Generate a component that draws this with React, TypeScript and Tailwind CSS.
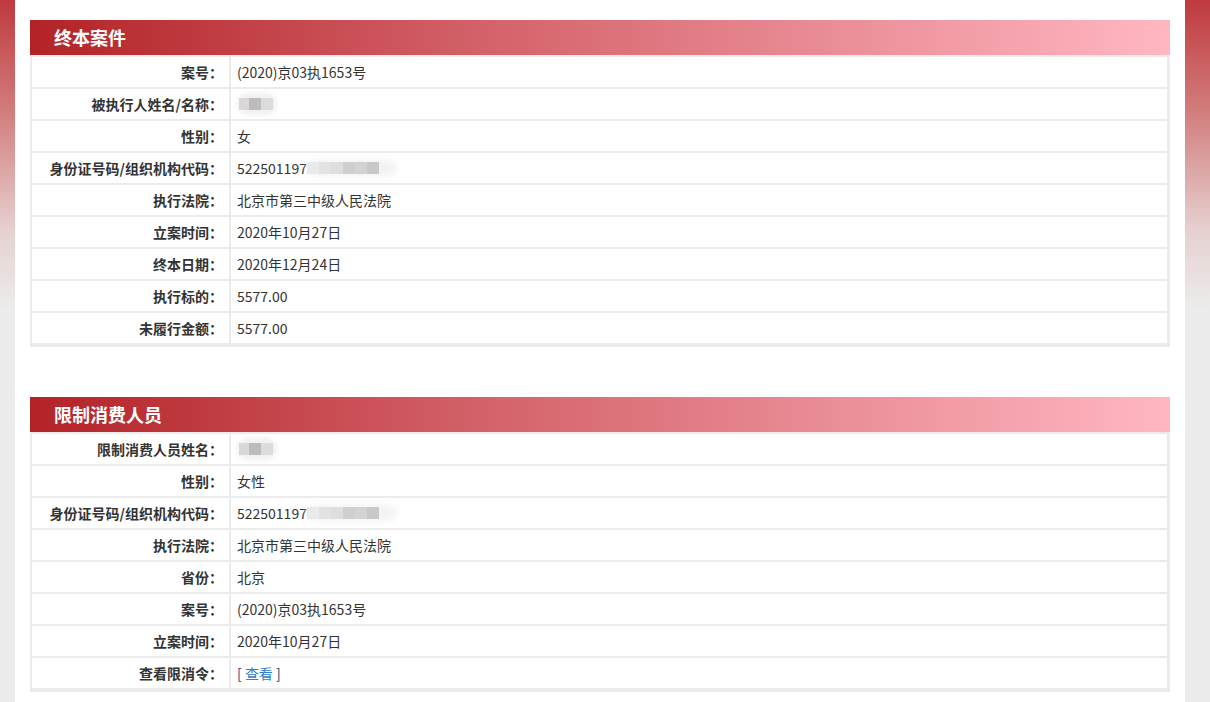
const font = '"Noto Sans CJK SC", "Microsoft YaHei", sans-serif';

type Row = { label: string; value: React.ReactNode };

function Blur({ w, blocks }: { w: number; blocks: string[] }) {
  return (
    <span className="relative inline-flex items-center h-[20px] align-middle" style={{ width: w }}>
      <span className="absolute inset-y-[2px] left-0 right-0 rounded-full bg-[#f3f3f3] blur-[3px]" />
      <span className="relative flex blur-[0.6px]">
        {blocks.map((c, i) => (
          <span key={i} className="w-[12px] h-[12px]" style={{ background: c }} />
        ))}
      </span>
    </span>
  );
}

function NameBlur() {
  return (
    <span className="relative inline-block w-[40px] h-[22px] align-middle">
      <span className="absolute inset-0 rounded-full bg-[#f1f1f1] blur-[2px]" />
      <span className="absolute left-[2px] top-[5px] flex blur-[0.5px]">
        <span className="w-[10px] h-[12px] bg-[#d9d7d7]" />
        <span className="w-[12px] h-[12px] bg-[#bdbbbb]" />
        <span className="w-[12px] h-[12px] bg-[#dcdcdc]" />
      </span>
    </span>
  );
}

function IdValue() {
  return (
    <span className="flex items-center">
      <span>522501197</span>
      <Blur w={90} blocks={['#eaeaea', '#e2e2e2', '#dedede', '#cfcfcf', '#d3d3d3', '#c9c9c9']} />
    </span>
  );
}

function Section({ title, rows }: { title: string; rows: Row[] }) {
  return (
    <div>
      <div className="h-[35px] flex items-center pl-[24px] bg-[linear-gradient(90deg,#b22327,#d4626a_40%,#ffb7c2)]">
        <span className="text-white text-[18px] font-bold">{title}</span>
      </div>
      <div className="grid grid-cols-[197px_1fr] gap-[2px] bg-[#ebebeb] pl-[2px] pr-[3px] pt-[2px] pb-[4px]">
        {rows.map((r) => (
          <div key={r.label} className="contents">
            <div className="h-[30px] bg-white flex items-center justify-end pr-[6px] font-bold text-[14px] text-[#333]">
              {r.label}：
            </div>
            <div className="h-[30px] bg-white flex items-center pl-[6px] text-[14px] text-[#333]">
              {r.value}
            </div>
          </div>
        ))}
      </div>
    </div>
  );
}

export default function App() {
  const caseRows: Row[] = [
    { label: '案号', value: '(2020)京03执1653号' },
    { label: '被执行人姓名/名称', value: <NameBlur /> },
    { label: '性别', value: '女' },
    { label: '身份证号码/组织机构代码', value: <IdValue /> },
    { label: '执行法院', value: '北京市第三中级人民法院' },
    { label: '立案时间', value: '2020年10月27日' },
    { label: '终本日期', value: '2020年12月24日' },
    { label: '执行标的', value: '5577.00' },
    { label: '未履行金额', value: '5577.00' },
  ];

  const limitRows: Row[] = [
    { label: '限制消费人员姓名', value: <NameBlur /> },
    { label: '性别', value: '女性' },
    { label: '身份证号码/组织机构代码', value: <IdValue /> },
    { label: '执行法院', value: '北京市第三中级人民法院' },
    { label: '省份', value: '北京' },
    { label: '案号', value: '(2020)京03执1653号' },
    { label: '立案时间', value: '2020年10月27日' },
    {
      label: '查看限消令',
      value: (
        <span className="text-[#2c3e7a]">
          [ <span className="text-[#2f7dcc]">查看</span> ]
        </span>
      ),
    },
  ];

  return (
    <div
      className="min-h-screen pl-[15px] pr-[25px] bg-[#ececec] bg-no-repeat bg-[linear-gradient(180deg,#bf3a3e_0px,#d27c7c_110px,#e6d0d0_230px,#ececec_310px)]"
      style={{ fontFamily: font }}
    >
      <div className="bg-white min-h-screen px-[15px] pt-[20px] pb-[10px] flex flex-col gap-[50px]">
        <Section title="终本案件" rows={caseRows} />
        <Section title="限制消费人员" rows={limitRows} />
      </div>
    </div>
  );
}
